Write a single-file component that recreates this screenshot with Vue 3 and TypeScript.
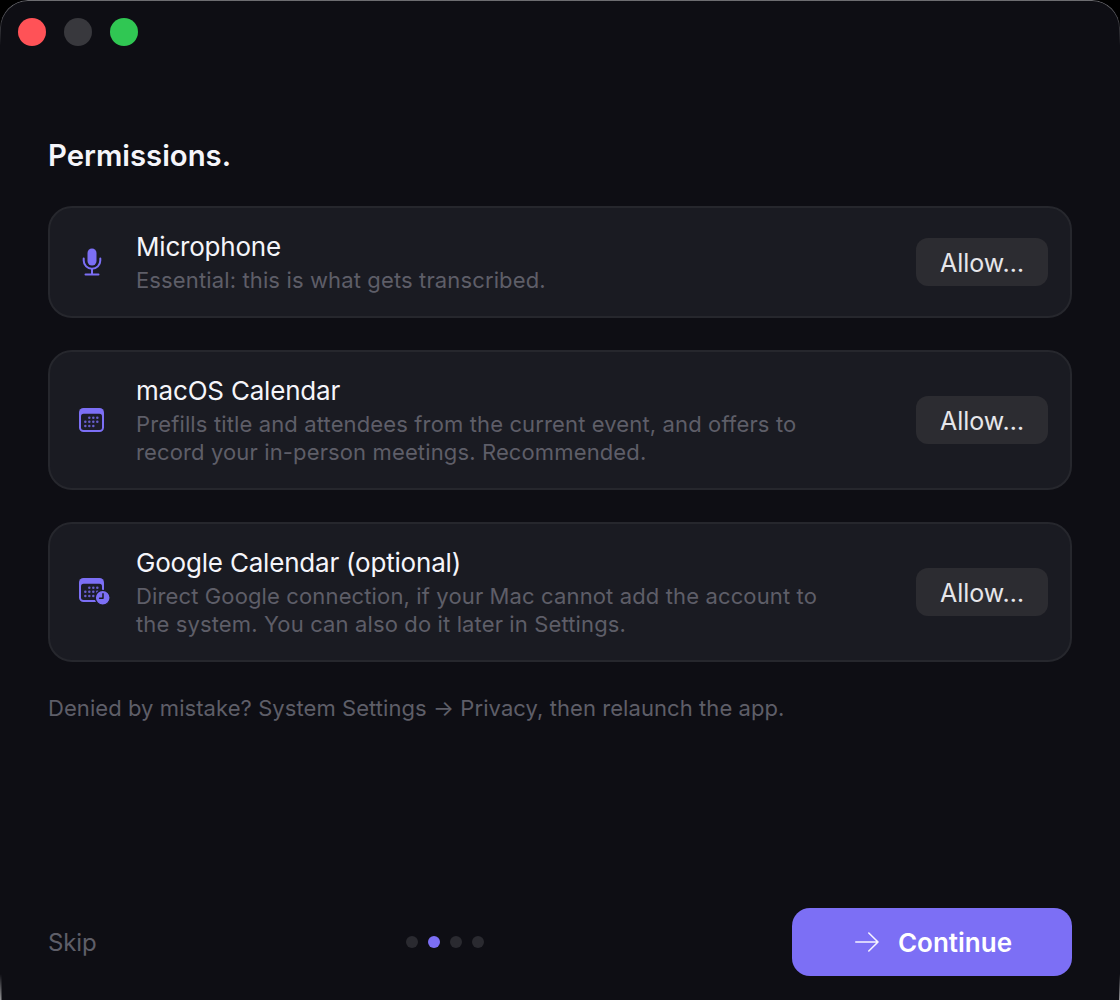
<script setup lang="ts">
interface Permission {
  name: string
  lines: string[]
  icon: 'mic' | 'cal' | 'gcal'
}

const permissions: Permission[] = [
  { name: 'Microphone', lines: ['Essential: this is what gets transcribed.'], icon: 'mic' },
  {
    name: 'macOS Calendar',
    lines: ['Prefills title and attendees from the current event, and offers to', 'record your in-person meetings. Recommended.'],
    icon: 'cal',
  },
  {
    name: 'Google Calendar (optional)',
    lines: ['Direct Google connection, if your Mac cannot add the account to', 'the system. You can also do it later in Settings.'],
    icon: 'gcal',
  },
]

const dots = [false, true, false, false]
const calDots = [
  [10.3, 9.7], [14.3, 9.7], [18.3, 9.7],
  [6.3, 13.8], [10.3, 13.8], [14.3, 13.8], [18.3, 13.8],
  [6.3, 18], [10.3, 18], [14.3, 18],
]
</script>

<template>
  <div class="window">
    <div class="titlebar">
      <span class="light red"></span>
      <span class="light grey"></span>
      <span class="light green"></span>
    </div>
    <main class="content">
      <h1 class="title">Permissions.</h1>
      <div class="cards">
        <section v-for="p in permissions" :key="p.name" class="card">
          <div class="icon">
            <svg v-if="p.icon === 'mic'" width="28" height="30" viewBox="0 0 28 30" fill="none">
              <rect x="7.5" y="1.5" width="9" height="17" rx="4.5" fill="#7c6ff5" />
              <path d="M3.7 11.5v2a8.3 8.3 0 0 0 16.6 0v-2" stroke="#7c6ff5" stroke-width="2" stroke-linecap="round" />
              <path d="M12 22v5.5M5.5 27.5H18.5" stroke="#7c6ff5" stroke-width="2" stroke-linecap="round" />
            </svg>
            <svg v-else width="30" :height="p.icon === 'gcal' ? 28 : 24" viewBox="0 0 30 28" class="cal" preserveAspectRatio="xMinYMin slice" fill="none">
              <rect x="0" y="0" width="25" height="24" rx="4.5" fill="#7c6ff5" />
              <rect x="2" y="5.7" width="21" height="16.3" rx="2.5" fill="#1c1c28" />
              <circle v-for="(d, i) in calDots" :key="i" :cx="d[0]" :cy="d[1]" r="1.25" fill="#7c6ff5" fill-opacity="0.8" />
              <template v-if="p.icon === 'gcal'">
                <circle cx="23.7" cy="19.7" r="7.4" fill="#7c6ff5" stroke="#1a1b22" stroke-width="1.2" />
                <path d="M24 15.8V20.2H20.6" stroke="#1a1b22" stroke-width="1.5" stroke-linecap="round" stroke-linejoin="round" />
              </template>
            </svg>
          </div>
          <div class="text">
            <div class="name">{{ p.name }}</div>
            <div class="desc">
              <div v-for="line in p.lines" :key="line">{{ line }}</div>
            </div>
          </div>
          <button class="allow" type="button"><span class="allow-label">Allow…</span></button>
        </section>
      </div>
      <p class="note">Denied by mistake? System Settings → Privacy, then relaunch the app.</p>
    </main>
    <footer class="footer">
      <span class="skip">Skip</span>
      <div class="dots">
        <span v-for="(on, i) in dots" :key="i" class="dot" :class="{ on }"></span>
      </div>
      <button class="continue" type="button">
        <svg width="24" height="20" viewBox="0 0 24 20" fill="none">
          <path d="M0.8 10H23M13.8 1L23 10L13.8 19" stroke="#f5f3ff" stroke-width="1.6" stroke-linecap="round" stroke-linejoin="round" />
        </svg>
        <span>Continue</span>
      </button>
    </footer>
  </div>
</template>

<style>
html, body { background: #000; }
</style>

<style scoped>
.window {
  position: relative;
  width: 1120px;
  height: 1000px;
  box-sizing: border-box;
  display: flex;
  flex-direction: column;
  background: #0e0e14;
  border-radius: 28px 28px 0 0;
  font-family: Inter, "Liberation Sans", sans-serif;
  overflow: hidden;
}
.window::before {
  content: "";
  position: absolute;
  inset: 0;
  border-radius: 28px 28px 0 0;
  border: 1.5px solid transparent;
  border-bottom: none;
  background: linear-gradient(to bottom, rgba(255, 255, 255, 0.4), rgba(255, 255, 255, 0) 46px) border-box;
  -webkit-mask: linear-gradient(#fff 0 0) padding-box, linear-gradient(#fff 0 0);
  -webkit-mask-composite: xor;
  mask-composite: exclude;
  pointer-events: none;
}
.window::after {
  content: "";
  position: absolute;
  left: 0;
  right: 0;
  bottom: 0;
  height: 26px;
  background:
    linear-gradient(to bottom, rgba(255, 255, 255, 0), rgba(255, 255, 255, 0.55)) left / 1.5px 100% no-repeat,
    linear-gradient(to bottom, rgba(255, 255, 255, 0), rgba(255, 255, 255, 0.55)) right / 1.5px 100% no-repeat;
  pointer-events: none;
}
.titlebar {
  display: flex;
  gap: 18px;
  padding: 18px 18px 0;
}
.light {
  width: 28px;
  height: 28px;
  border-radius: 50%;
}
.red { background: #ff5257; }
.grey { background: #38383d; }
.green { background: #30c753; }
.content {
  padding: 0 48px;
}
.title {
  margin: 89px 0 0;
  font-size: 29.3px;
  line-height: 42px;
  font-weight: 600;
  color: #f5f5fa;
}
.cards {
  margin-top: 29px;
  display: flex;
  flex-direction: column;
  gap: 32px;
}
.card {
  display: flex;
  align-items: center;
  box-sizing: border-box;
  padding: 22px 22px 22px 22px;
  background: #1a1b22;
  border: 2px solid #26272d;
  border-radius: 24px;
}
.icon {
  width: 44px;
  flex: none;
  display: flex;
  justify-content: center;
  margin-right: 20px;
}
.cal { overflow: visible; }
.text {
  flex: 1;
  min-width: 0;
}
.name {
  font-size: 26px;
  line-height: 34px;
  letter-spacing: -0.2px;
  margin-bottom: 2px;
  color: #f5f5fa;
}
.desc {
  font-size: 22px;
  line-height: 28px;
  letter-spacing: 0.13px;
  color: #5e5e68;
  white-space: nowrap;
}
.allow {
  flex: none;
  width: 132px;
  height: 48px;
  padding: 2px 0 0;
  border: none;
  border-radius: 12px;
  background: #2c2c31;
  color: #e6e6ea;
  font: 400 25px Inter, "Liberation Sans", sans-serif;
}
.note {
  margin: 30px 0 0;
  font-size: 22px;
  line-height: 32px;
  letter-spacing: 0.07px;
  color: #5e5e68;
}
.footer {
  margin-top: auto;
  padding: 0 48px 24px;
  display: flex;
  justify-content: space-between;
  align-items: center;
}
.skip {
  width: 50px;
  font-size: 24px;
  letter-spacing: -0.1px;
  color: #5e5e68;
}
.dots {
  display: flex;
  gap: 10px;
}
.dot {
  width: 12px;
  height: 12px;
  border-radius: 50%;
  background: #2a2a30;
}
.dot.on { background: #7c6ff5; }
.continue {
  width: 280px;
  height: 68px;
  padding: 0 0 0 3px;
  border: none;
  border-radius: 18px;
  background: #7c6ff5;
  color: #fff;
  display: flex;
  align-items: center;
  justify-content: center;
  gap: 19px;
  font: 600 26px Inter, "Liberation Sans", sans-serif;
}
</style>
